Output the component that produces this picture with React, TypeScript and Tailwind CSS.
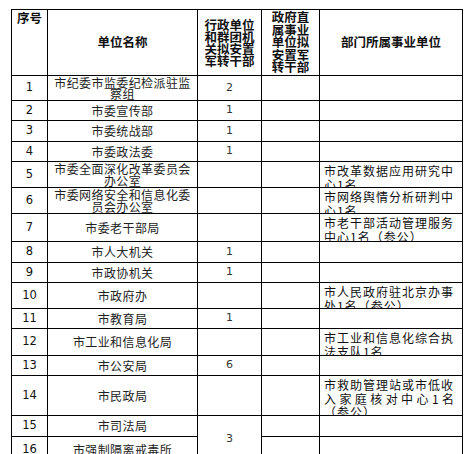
import React from "react";

type Row = {
  no: string;
  name: string[];
  c3?: string;
  c3span?: boolean;
  skipC3?: boolean;
  c5?: string[];
  justifyLines?: number[];
};

const rows: Row[] = [
  { no: "1", name: ["市纪委市监委纪检派驻监", "察组"], c3: "2" },
  { no: "2", name: ["市委宣传部"], c3: "1" },
  { no: "3", name: ["市委统战部"], c3: "1" },
  { no: "4", name: ["市委政法委"], c3: "1" },
  { no: "5", name: ["市委全面深化改革委员会", "办公室"], c5: ["市改革数据应用研究中", "心1名"] },
  { no: "6", name: ["市委网络安全和信息化委", "员会办公室"], c5: ["市网络舆情分析研判中", "心1名"] },
  { no: "7", name: ["市委老干部局"], c5: ["市老干部活动管理服务", "中心1名（参公）"] },
  { no: "8", name: ["市人大机关"], c3: "1" },
  { no: "9", name: ["市政协机关"], c3: "1" },
  { no: "10", name: ["市政府办"], c5: ["市人民政府驻北京办事", "处1名（参公）"] },
  { no: "11", name: ["市教育局"], c3: "1" },
  { no: "12", name: ["市工业和信息化局"], c5: ["市工业和信息化综合执", "法支队1名"] },
  { no: "13", name: ["市公安局"], c3: "6" },
  {
    no: "14",
    name: ["市民政局"],
    c5: ["市救助管理站或市低收", "入家庭核对中心1名", "（参公）"],
    justifyLines: [1],
  },
  { no: "15", name: ["市司法局"], c3: "3", c3span: true },
  { no: "16", name: ["市强制隔离戒毒所"], skipC3: true },
];

const cell = "border-r border-b border-black overflow-hidden";
const cjk = { fontFamily: "'Noto Sans CJK SC', 'Noto Sans', sans-serif" };
const num = { fontFamily: "'DejaVu Sans', 'Liberation Sans', sans-serif" };

export default function App() {
  return (
    <div className="bg-white w-[471px] h-[454px] overflow-hidden pt-[9px] pl-[11px] text-[#111]">
      <div
        className="grid w-[452px] border-l border-t border-black grid-cols-[36px_150px_64px_58px_143px] grid-rows-[66px_25px_20px_21px_20px_26px_26px_28px_21px_20px_26px_20px_27px_20px_40px_21px_26px]"
        style={cjk}
      >
        {/* header */}
        <div className={`${cell} flex justify-center pt-[1px] text-[12.5px] font-bold leading-[14px]`}>
          序号
        </div>
        <div className={`${cell} flex items-center justify-center text-[12.5px] font-bold`}>
          单位名称
        </div>
        <div className={`${cell} flex flex-col items-center justify-center text-[12.5px] font-bold leading-[12px]`}>
          <span>行政单位</span>
          <span>和群团机</span>
          <span>关拟安置</span>
          <span>军转干部</span>
        </div>
        <div className={`${cell} flex flex-col items-center justify-center text-[12.5px] font-bold leading-[12.5px]`}>
          <span>政府直</span>
          <span>属事业</span>
          <span>单位拟</span>
          <span>安置军</span>
          <span>转干部</span>
        </div>
        <div className={`${cell} flex items-center justify-center text-[12.5px] font-bold`}>
          部门所属事业单位
        </div>

        {rows.map((r) => (
          <React.Fragment key={r.no}>
            <div className={`${cell} flex items-center justify-center text-[11.5px]`} style={num}>
              {r.no}
            </div>
            <div className={`${cell} flex flex-col items-center justify-center text-[12px] tracking-[0.4px] leading-[11.5px] text-[#222]`}>
              {r.name.map((l, i) => (
                <span key={i}>{l}</span>
              ))}
            </div>
            {!r.skipC3 && (
              <div
                className={`${cell} flex items-center justify-center text-[11px] text-[#333] ${r.c3span ? "row-span-2" : ""}`}
                style={num}
              >
                {r.c3 ?? ""}
              </div>
            )}
            <div className={cell}></div>
            <div className={`${cell} pl-[4px] pt-[2px] text-[12px] tracking-[1px] leading-[13.5px]`}>
              {(r.c5 ?? []).map((l, i) => (
                <div
                  key={i}
                  className={
                    r.justifyLines?.includes(i)
                      ? "w-[131px] whitespace-nowrap text-justify [text-align-last:justify]"
                      : "whitespace-nowrap"
                  }
                >
                  {l}
                </div>
              ))}
            </div>
          </React.Fragment>
        ))}
      </div>
    </div>
  );
}
